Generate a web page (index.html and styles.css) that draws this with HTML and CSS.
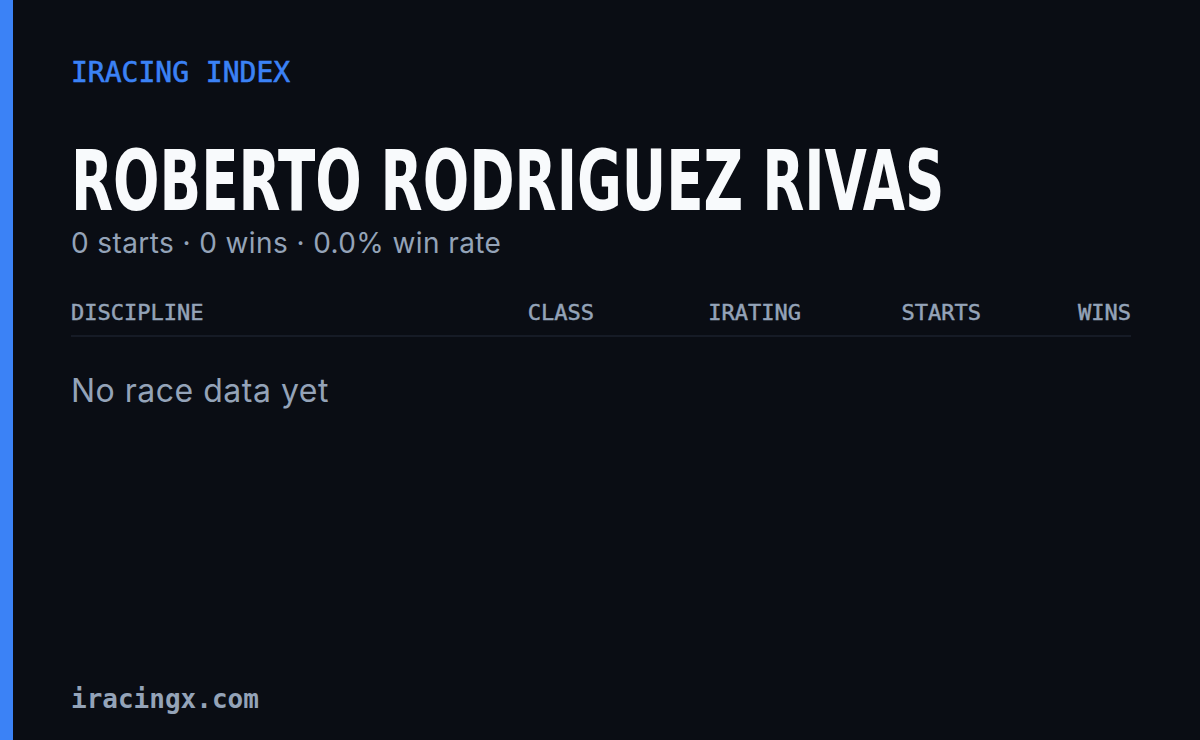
FILE: index.html
```html
<!DOCTYPE html>
<html>
<head>
<meta charset="utf-8">
<link rel="stylesheet" href="styles.css">
</head>
<body>
<div class="page">
  <div class="accent"></div>
  <main class="content">
    <div class="eyebrow">IRACING INDEX</div>
    <h1 class="name"><span class="name-text">ROBERTO RODRIGUEZ RIVAS</span></h1>
    <p class="summary">0 starts · 0 wins · 0.0% win rate</p>
    <div class="table">
      <div class="thead">
        <span class="th th-left">DISCIPLINE</span>
        <span class="th">CLASS</span>
        <span class="th">IRATING</span>
        <span class="th">STARTS</span>
        <span class="th">WINS</span>
      </div>
      <div class="empty">No race data yet</div>
    </div>
    <div class="footer">iracingx.com</div>
  </main>
</div>
</body>
</html>
```
FILE: styles.css
```css
html, body {
  margin: 0;
  padding: 0;
  width: 1200px;
  height: 740px;
  background: #0a0d14;
  overflow: hidden;
}
.page {
  display: flex;
  width: 1200px;
  height: 740px;
}
.accent {
  width: 13px;
  flex: none;
  background: #3b82f6;
}
.content {
  flex: 1;
  min-width: 0;
  display: flex;
  flex-direction: column;
  padding: 59px 69px 26px 58px;
}
.eyebrow {
  font-family: "DejaVu Sans Mono", monospace;
  font-size: 28px;
  line-height: 28px;
  color: #3b82f6;
  font-weight: 400;
  -webkit-text-stroke: 0.6px currentColor;
}
.name {
  margin: 52px 0 0 0;
  height: 84px;
  font-family: "DejaVu Sans Condensed", "DejaVu Sans", sans-serif;
  font-weight: 700;
  font-size: 60px;
  line-height: 60px;
  color: #f8fafc;
  white-space: nowrap;
}
.name-text {
  display: inline-block;
  vertical-align: top;
  transform: scale(1.0124, 1.4);
  transform-origin: left top;
}
.summary {
  margin: 2px 0 0 0;
  font-family: "Inter", sans-serif;
  font-size: 28px;
  line-height: 36px;
  letter-spacing: 0.4px;
  color: #94a3b8;
}
.table {
  margin-top: 40px;
}
.thead {
  display: grid;
  grid-template-columns: 1fr 120px 207px 180px 150px;
  padding-bottom: 10px;
  border-bottom: 2px solid #161b26;
}
.th {
  font-family: "DejaVu Sans Mono", monospace;
  font-size: 22px;
  line-height: 24px;
  font-weight: 400;
  color: #94a3b8;
  text-align: right;
  -webkit-text-stroke: 0.5px currentColor;
}
.th-left {
  text-align: left;
}
.empty {
  margin-top: 34px;
  font-family: "Inter", sans-serif;
  font-size: 32px;
  line-height: 40px;
  letter-spacing: 0.5px;
  color: #94a3b8;
}
.footer {
  margin-top: auto;
  font-family: "DejaVu Sans Mono", monospace;
  font-size: 26px;
  line-height: 30px;
  font-weight: 700;
  color: #94a3b8;
}
```
